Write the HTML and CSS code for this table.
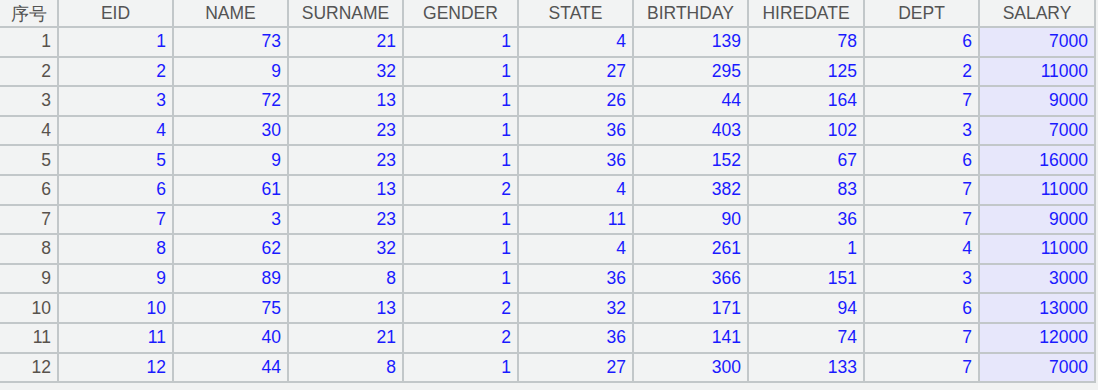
FILE: index.html
```html
<!DOCTYPE html>
<html>
<head>
<meta charset="utf-8">
<link rel="stylesheet" href="styles.css">
</head>
<body>
<div class="grid">
  <div class="h">序号</div><div class="h">EID</div><div class="h">NAME</div><div class="h">SURNAME</div><div class="h">GENDER</div><div class="h">STATE</div><div class="h">BIRTHDAY</div><div class="h">HIREDATE</div><div class="h">DEPT</div><div class="h">SALARY</div>
  <div class="n">1</div><div class="c">1</div><div class="c">73</div><div class="c">21</div><div class="c">1</div><div class="c">4</div><div class="c">139</div><div class="c">78</div><div class="c">6</div><div class="c s">7000</div>
  <div class="n">2</div><div class="c">2</div><div class="c">9</div><div class="c">32</div><div class="c">1</div><div class="c">27</div><div class="c">295</div><div class="c">125</div><div class="c">2</div><div class="c s">11000</div>
  <div class="n">3</div><div class="c">3</div><div class="c">72</div><div class="c">13</div><div class="c">1</div><div class="c">26</div><div class="c">44</div><div class="c">164</div><div class="c">7</div><div class="c s">9000</div>
  <div class="n">4</div><div class="c">4</div><div class="c">30</div><div class="c">23</div><div class="c">1</div><div class="c">36</div><div class="c">403</div><div class="c">102</div><div class="c">3</div><div class="c s">7000</div>
  <div class="n">5</div><div class="c">5</div><div class="c">9</div><div class="c">23</div><div class="c">1</div><div class="c">36</div><div class="c">152</div><div class="c">67</div><div class="c">6</div><div class="c s">16000</div>
  <div class="n">6</div><div class="c">6</div><div class="c">61</div><div class="c">13</div><div class="c">2</div><div class="c">4</div><div class="c">382</div><div class="c">83</div><div class="c">7</div><div class="c s">11000</div>
  <div class="n">7</div><div class="c">7</div><div class="c">3</div><div class="c">23</div><div class="c">1</div><div class="c">11</div><div class="c">90</div><div class="c">36</div><div class="c">7</div><div class="c s">9000</div>
  <div class="n">8</div><div class="c">8</div><div class="c">62</div><div class="c">32</div><div class="c">1</div><div class="c">4</div><div class="c">261</div><div class="c">1</div><div class="c">4</div><div class="c s">11000</div>
  <div class="n">9</div><div class="c">9</div><div class="c">89</div><div class="c">8</div><div class="c">1</div><div class="c">36</div><div class="c">366</div><div class="c">151</div><div class="c">3</div><div class="c s">3000</div>
  <div class="n">10</div><div class="c">10</div><div class="c">75</div><div class="c">13</div><div class="c">2</div><div class="c">32</div><div class="c">171</div><div class="c">94</div><div class="c">6</div><div class="c s">13000</div>
  <div class="n">11</div><div class="c">11</div><div class="c">40</div><div class="c">21</div><div class="c">2</div><div class="c">36</div><div class="c">141</div><div class="c">74</div><div class="c">7</div><div class="c s">12000</div>
  <div class="n">12</div><div class="c">12</div><div class="c">44</div><div class="c">8</div><div class="c">1</div><div class="c">27</div><div class="c">300</div><div class="c">133</div><div class="c">7</div><div class="c s">7000</div>
</div>
</body>
</html>
```
FILE: styles.css
```css
html, body {
  margin: 0;
  padding: 0;
  background: #f1f2f2;
  width: 1098px;
  height: 390px;
  overflow: hidden;
}
.grid {
  display: grid;
  grid-template-columns: 57px 113px 113px 113px 113px 113px 113px 114px 113px 114px;
  grid-template-rows: 26px repeat(12, 27.6px);
  gap: 2px;
  background: #c2c7c9;
  width: 1096px;
  padding: 0 2px 2px 0;
  box-sizing: border-box;
  font-family: "Liberation Sans", Arial, sans-serif;
  font-size: 17.5px;
}
.h, .n, .c {
  background: #f2f3f3;
  display: flex;
  align-items: center;
  white-space: nowrap;
  overflow: hidden;
}
.h {
  justify-content: center;
  color: #545454;
  padding-top: 1px;
}
.n {
  justify-content: flex-end;
  padding-right: 6px;
  color: #58524c;
}
.c {
  justify-content: flex-end;
  padding-right: 6px;
  color: #1a1aff;
}
.s {
  background: #e7e7fb;
}
```
